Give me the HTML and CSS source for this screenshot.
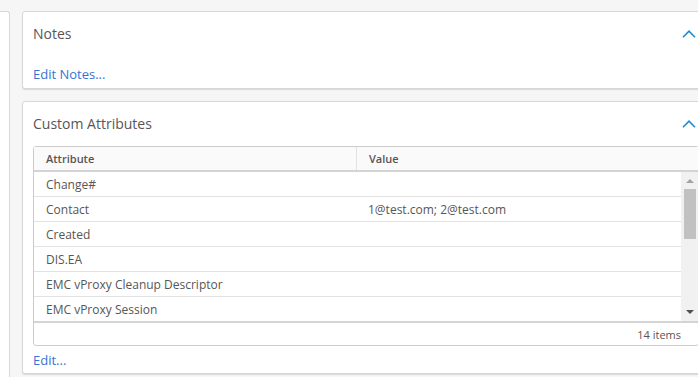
FILE: index.html
```html
<!DOCTYPE html>
<html lang="en">
<head>
    <meta charset="UTF-8">
    <meta name="viewport" content="width=device-width, initial-scale=1.0">
    <title>Summary</title>
    <link rel="stylesheet" href="styles.css">
</head>
<body>
    <div class="page">
        <div class="side-card"></div>

        <div class="main">
            <!-- Notes -->
            <section class="card">
                <div class="card-header">
                    <h2>Notes</h2>
                    <svg class="chevron" viewBox="0 0 14 8" width="14" height="8"><path d="M1 7.2 L7 1.2 L13 7.2"/></svg>
                </div>
                <a class="link notes-link" href="#">Edit Notes...</a>
            </section>

            <!-- Custom Attributes -->
            <section class="card">
                <div class="card-header">
                    <h2>Custom Attributes</h2>
                    <svg class="chevron" viewBox="0 0 14 8" width="14" height="8"><path d="M1 7.2 L7 1.2 L13 7.2"/></svg>
                </div>
                <div class="grid">
                    <div class="grid-head">
                        <div class="col-attr">Attribute</div>
                        <div class="col-value">Value</div>
                    </div>
                    <div class="grid-body">
                        <div class="rows">
                            <div class="row"><div class="col-attr">Change#</div><div class="col-value"></div></div>
                            <div class="row"><div class="col-attr">Contact</div><div class="col-value">1@test.com; 2@test.com</div></div>
                            <div class="row"><div class="col-attr">Created</div><div class="col-value"></div></div>
                            <div class="row"><div class="col-attr">DIS.EA</div><div class="col-value"></div></div>
                            <div class="row"><div class="col-attr">EMC vProxy Cleanup Descriptor</div><div class="col-value"></div></div>
                            <div class="row"><div class="col-attr">EMC vProxy Session</div><div class="col-value"></div></div>
                        </div>
                        <div class="scrollbar">
                            <span class="arrow up"></span>
                            <span class="thumb"></span>
                            <span class="arrow down"></span>
                        </div>
                    </div>
                    <div class="grid-foot">14 items</div>
                </div>
                <a class="link edit-link" href="#">Edit...</a>
            </section>
        </div>
    </div>
</body>
</html>
```

FILE: styles.css
```css
body {
    margin: 0;
    background: #f6f6f6;
    font-family: 'Open Sans', 'Liberation Sans', sans-serif;
    color: #565656;
    overflow: hidden;
}

.page {
    display: flex;
    gap: 12px;
    padding-top: 11px;
    height: 377px;
    box-sizing: border-box;
}

.side-card {
    flex: 0 0 9px;
    background: #fff;
    border: 1px solid #d7d7d7;
    border-left: none;
    border-bottom: none;
    border-radius: 0 3px 0 0;
}

.main {
    flex: 0 0 688px;
    display: flex;
    flex-direction: column;
    gap: 12px;
}

.card {
    background: #fff;
    border: 1px solid #d7d7d7;
    border-radius: 3px;
    box-shadow: 0 1px 1px rgba(0, 0, 0, 0.12);
    padding: 0 10px 4px 10px;
    display: flex;
    flex-direction: column;
    align-items: flex-start;
}

.card-header {
    align-self: stretch;
    display: flex;
    justify-content: space-between;
    align-items: center;
    padding: 11px 0;
}

.card-header h2 {
    margin: 0;
    font-size: 14px;
    font-weight: 400;
    line-height: 22px;
    color: #565656;
}

.chevron {
    margin-right: 3px;
    fill: none;
    stroke: #1f8bd0;
    stroke-width: 1.6;
}

.link {
    color: #3574d4;
    text-decoration: none;
    font-size: 13px;
    line-height: 18px;
}

.notes-link {
    margin: 9px 0 1px;
}

.edit-link {
    margin-top: 5px;
}

/* datagrid */
.grid {
    align-self: stretch;
    border: 1px solid #ccc;
    border-radius: 3px;
    font-size: 12px;
}

.grid-head {
    display: flex;
    background: #fafafa;
    border-bottom: 2px solid #d4d4d4;
    height: 23px;
    font-size: 11px;
    font-weight: 600;
}

.grid-head > div {
    display: flex;
    align-items: center;
    padding-left: 12px;
}

.grid-head .col-attr {
    border-right: 1px solid #e2e2e2;
}

.col-attr {
    flex: 0 0 310px;
    padding-left: 12px;
}

.col-value {
    flex: 1;
    padding-left: 12px;
}

.grid-body {
    display: flex;
    height: 149px;
    overflow: hidden;
}

.rows {
    flex: 1;
}

.row {
    display: flex;
    align-items: center;
    height: 24px;
    border-bottom: 1px solid #e2e2e2;
}

.scrollbar {
    flex: 0 0 17px;
    background: #f1f1f1;
    display: flex;
    flex-direction: column;
    align-items: center;
}

.arrow {
    width: 0;
    height: 0;
    border-left: 4px solid transparent;
    border-right: 4px solid transparent;
}

.arrow.up {
    margin-top: 7px;
    border-bottom: 4px solid #a3a3a3;
}

.arrow.down {
    margin-top: auto;
    margin-bottom: 7px;
    border-top: 4px solid #505050;
}

.thumb {
    width: 12px;
    height: 50px;
    margin-top: 6px;
    background: #c1c1c1;
}

.grid-foot {
    border-top: 2px solid #d4d4d4;
    height: 22px;
    display: flex;
    align-items: center;
    justify-content: flex-end;
    padding-right: 17px;
    font-size: 11px;
}
```
